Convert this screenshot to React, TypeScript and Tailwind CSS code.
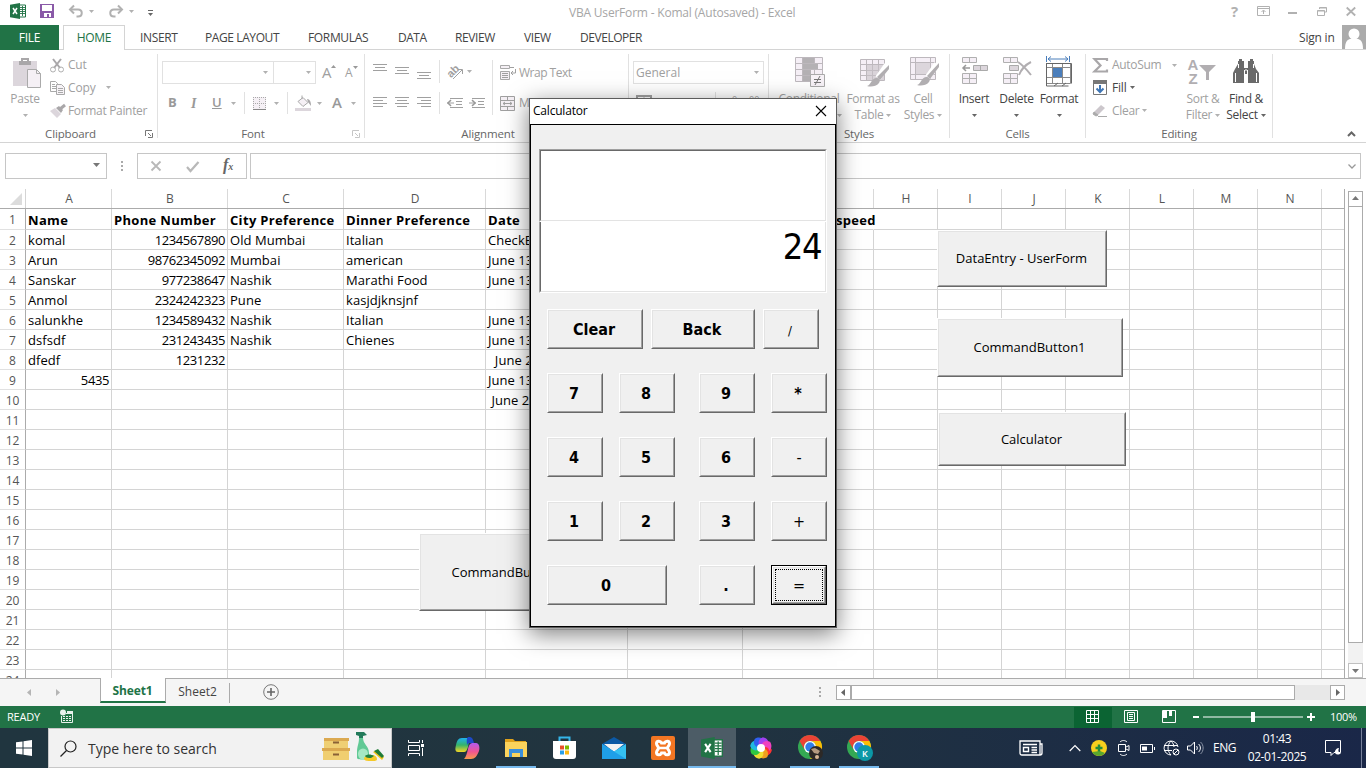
import React from "react";

type Kids = { children?: React.ReactNode; className?: string };

/* ---------- small shared pieces ---------- */

function Svg({ w, h, className = "", children }: { w: number; h: number; className?: string; children: React.ReactNode }) {
  return (
    <svg width={w} height={h} viewBox={`0 0 ${w} ${h}`} className={"block shrink-0 overflow-visible " + className} fill="none">
      {children}
    </svg>
  );
}

function Caret({ className = "text-[#b1b1b1]" }: { className?: string }) {
  return (
    <Svg w={5} h={3} className={className}>
      <path d="M0 0h5L2.500 3z" fill="currentColor" />
    </Svg>
  );
}

function Slot({ className = "", children }: Kids) {
  return <div className={"flex shrink-0 items-center whitespace-nowrap " + className}>{children}</div>;
}

function Launcher({ className = "" }: { className?: string }) {
  return (
    <Svg w={8} h={8} className={className}>
      <path d="M.5 6V.5H7M3 3l3 3M7.500 3v4.500H3" stroke="currentColor" />
    </Svg>
  );
}

function ExcelLogo({ s = 16 }: { s?: number }) {
  return (
    <svg width={s} height={s} viewBox="0 0 16 16" className="block shrink-0">
      <path d="M9 2h6.500v12H9z" fill="#fff" stroke="#217346" />
      <path d="M10 4.500h5M10 6.500h5M10 8.500h5M10 10.500h5M12.500 3v10" stroke="#217346" strokeWidth=".9" />
      <path d="M0 1.800 10 0v16L0 14.200z" fill="#217346" />
      <path d="M3 5l4 6M7 5l-4 6" stroke="#fff" strokeWidth="1.500" />
    </svg>
  );
}

/* ---------- title bar and tabs ---------- */

function TitleBar() {
  return (
    <div className="flex h-[25px] w-full text-[#b1b1b1]">
      <Slot className="w-[40px] pb-[3px] pl-[10px]"><ExcelLogo /></Slot>
      <Slot className="w-[29px] pb-[3px]">
        <Svg w={14} h={14}>
          <path d="M0 0h14v14H0z" fill="#8a5aa8" />
          <path d="M2 1h10v6H2zM4 9h7v4H4z" fill="#fff" />
          <path d="M7 10h2v3H7z" fill="#8a5aa8" />
        </Svg>
      </Slot>
      <Slot className="w-[40px] pb-[3px]">
        <Svg w={14} h={13}>
          <path d="M2 4.500h7c5 0 5 7 0 7H7.500" stroke="#b1b1b1" strokeWidth="2" />
          <path d="M5 .5 1 4.500l4 4" stroke="#b1b1b1" strokeWidth="2" />
        </Svg>
        <Caret className="ml-[6px] text-[#b1b1b1]" />
      </Slot>
      <Slot className="w-[39px] pb-[3px]">
        <Svg w={14} h={13}>
          <path d="M12 4.500H5c-5 0-5 7 0 7h1.500" stroke="#b1b1b1" strokeWidth="2" />
          <path d="M9 .5l4 4-4 4" stroke="#b1b1b1" strokeWidth="2" />
        </Svg>
        <Caret className="ml-[6px] text-[#b1b1b1]" />
      </Slot>
      <Slot className="w-[421px]">
        <Svg w={5} h={6}>
          <path d="M0 .5h5" stroke="#666" />
          <path d="M0 3h5L2.500 6z" fill="#666" />
        </Svg>
      </Slot>
      <Slot className="w-[662px] text-[12px] tracking-[-0.2px] text-[#a6a6a6]">VBA UserForm - Komal (Autosaved) - Excel</Slot>
      <Slot className="w-[26px] pb-[3px] text-[15px] font-bold">?</Slot>
      <Slot className="w-[31px] pb-[3px]">
        <Svg w={13} h={10}>
          <path d="M.5.5h12v9H.5zM.5 2.500h12M6.500 8V4.500M4.500 6l2-2 2 2" stroke="#b1b1b1" />
        </Svg>
      </Slot>
      <Slot className="w-[29px]">
        <Svg w={9} h={2}><path d="M0 0h9v2H0z" fill="#b1b1b1" /></Svg>
      </Slot>
      <Slot className="w-[29px] pb-[3px]">
        <Svg w={10} h={9}>
          <path d="M2.500 2V.5h7V5H8M.5 3.500h7v5h-7zM.5 4h7M2.500 1h7" stroke="#b1b1b1" />
        </Svg>
      </Slot>
      <Slot className="pb-[3px]">
        <Svg w={10} h={9}><path d="M.7.5l8.500 8M9.200.5l-8.500 8" stroke="#b1b1b1" strokeWidth="1.800" /></Svg>
      </Slot>
    </div>
  );
}

function Tabs() {
  return (
    <div className="flex h-[25px] w-full text-[12px] text-[#444]">
      <div className="flex h-[25px] w-[59px] items-center justify-center bg-[#217346] tracking-[-0.3px] text-white">FILE</div>
      <div className="w-[4px] border-b border-[#d4d4d4]" />
      <div className="flex w-[62px] items-center justify-center border-x border-t border-[#d4d4d4] tracking-[-0.3px] text-[#217346]">HOME</div>
      <div className="flex flex-1 border-b border-[#d4d4d4] pt-px">
        <Slot className="w-[80px] pl-[15px] tracking-[-0.35px]">INSERT</Slot>
        <Slot className="w-[103px] tracking-[-0.4px]">PAGE LAYOUT</Slot>
        <Slot className="w-[90px] tracking-[-0.35px]">FORMULAS</Slot>
        <Slot className="w-[57px] tracking-[-0.5px]">DATA</Slot>
        <Slot className="w-[69px] tracking-[-0.4px]">REVIEW</Slot>
        <Slot className="w-[56px] tracking-[-0.4px]">VIEW</Slot>
        <Slot className="w-[719px] tracking-[-0.45px]">DEVELOPER</Slot>
        <Slot className="w-[43px] tracking-[-0.2px]">Sign in</Slot>
        <Svg w={24} h={24} className="-mt-px">
          <path d="M0 0h24v24H0z" fill="#ababab" />
          <circle cx="12" cy="9" r="5.500" fill="#fff" />
          <path d="M3 24c0-8 3-10 6-10h6c3 0 6 2 6 10z" fill="#fff" />
        </Svg>
      </div>
    </div>
  );
}

/* ---------- ribbon ---------- */

function Group({ label, className, labelClass = "", launcher, children }: { label: string; className: string; labelClass?: string; launcher?: string; children: React.ReactNode }) {
  return (
    <div className={"flex h-[84px] shrink-0 flex-col border-r border-[#e1e1e1] " + className}>
      <div className="flex h-[72px] shrink-0">{children}</div>
      <div className="flex h-[16px] items-center text-[11.500px] tracking-[-0.15px] text-[#666]">
        <div className={"flex-1 text-center " + labelClass}>{label}</div>
        {launcher ? <Launcher className={"-ml-[8px] mr-[4px] " + launcher} /> : null}
      </div>
    </div>
  );
}

function Big({ className, icon, a, b, caretOnly, dark }: { className: string; icon: React.ReactNode; a: string; b?: string; caretOnly?: boolean; dark?: boolean }) {
  const tone = dark ? "text-[#444]" : "text-[#a0a0a0]";
  return (
    <div className={"flex shrink-0 flex-col items-center whitespace-nowrap text-[12px] tracking-[-0.3px] " + tone + " " + className}>
      <div className="flex h-[40px] items-start pt-[3px]">{icon}</div>
      <div className="flex h-[10px] items-center">{a}</div>
      <div className="flex h-[22px] items-center gap-[3px]">
        {b ? <span>{b}</span> : null}
        {b || caretOnly ? <Caret className={dark ? "text-[#666]" : "text-[#b1b1b1]"} /> : null}
      </div>
    </div>
  );
}

function Lines({ rows }: { rows: [number, number][] }) {
  return (
    <Svg w={14} h={rows.length * 3}>
      {rows.map(([x, w], i) => (
        <path key={i} d={`M${x} ${i * 3 + 0.5}h${w}`} stroke="#a0a0a0" />
      ))}
    </Svg>
  );
}

const wide: [number, number] = [0, 14];
const mid: [number, number] = [2, 10];

function Ribbon() {
  return (
    <div className="flex h-[93px] w-full border-b border-[#d4d4d4] pt-[4px] text-[12px] text-[#a0a0a0]">
      <Group label="Clipboard" className="w-[158px]" labelClass="pr-[12px]" launcher="text-[#777]">
        <div className="flex w-[51px] flex-col items-center pr-px">
          <div className="flex h-[40px] items-start pl-[4px] pt-[4px]">
            <Svg w={29} h={30}>
              <path d="M0 3h24v25H0z" fill="#dcd6dc" />
              <path d="M6 3h12v4H6z" fill="#a9a7a9" />
              <path d="M9 3V1h6v2" stroke="#a9a7a9" strokeWidth="2" />
              <path d="M14.500 11.500h9l4 4v14h-13z" fill="#f5f0f5" stroke="#aaa" />
              <path d="M23.500 11.500v4h4" stroke="#aaa" />
            </Svg>
          </div>
          <div className="flex h-[10px] items-center tracking-[-0.2px]">Paste</div>
          <div className="flex h-[22px] items-center"><Caret /></div>
        </div>
        <div className="-ml-px flex flex-col">
          <Slot className="h-[22px] tracking-[-0.2px]">
            <Svg w={14} h={15} className="mr-[4px]">
              <path d="M3 1l7 9M11 1L4 10" stroke="#a9a7a9" strokeWidth="2" />
              <circle cx="3" cy="11.500" r="2.500" stroke="#b0b0b0" />
              <circle cx="11" cy="11.500" r="2.500" stroke="#b0b0b0" />
            </Svg>
            Cut
          </Slot>
          <Slot className="h-[23px] tracking-[-0.1px]">
            <Svg w={15} h={14} className="mr-[3px]">
              <path d="M.5.5h5l2 2v8h-7z" fill="#fff" stroke="#a9a9a9" />
              <path d="M2 3.500h3M2 5.500h4M2 7.500h4" stroke="#a9a9a9" />
              <path d="M6.500 3.500h5l3 3v7h-8z" fill="#f7f3f7" stroke="#a9a9a9" />
              <path d="M8 7.500h5M8 9.500h5M8 11.500h5" stroke="#a9a9a9" />
            </Svg>
            <span className="w-[38px]">Copy</span><Caret />
          </Slot>
          <Slot className="h-[23px] tracking-[-0.33px]">
            <Svg w={16} h={14} className="mr-[2px]">
              <path d="M0 7l5-3 6 6-4 4z" fill="#dcd6dc" />
              <path d="M6 4l3-2 4 4-2 3z" fill="#a9a7a9" />
              <path d="M10 5l5-4" stroke="#a9a7a9" strokeWidth="3" />
            </Svg>
            Format Painter
          </Slot>
        </div>
      </Group>

      <Group label="Font" className="w-[207px]" labelClass="pr-[12px]" launcher="text-[#c6c6c6]">
        <div className="flex flex-col pl-[4px] pt-[7px]">
          <div className="flex h-[23px]">
            <div className="flex w-[112px] items-center justify-end border border-[#e1e1e1] pr-[5px]"><Caret /></div>
            <div className="flex w-[42px] items-center justify-end border border-l-0 border-[#e1e1e1] pr-[4px]"><Caret /></div>
            <Slot className="ml-[6px] w-[23px] text-[15px]">
              <span className="w-[9px]">A</span>
              <Svg w={5} h={3} className="mb-[12px]"><path d="M0 3h5L2.500 0z" fill="#999" /></Svg>
            </Slot>
            <Slot className="w-[16px] pt-[1px] text-[12px]">
              <span>A</span>
              <Caret className="mb-[12px] text-[#999]" />
            </Slot>
          </div>
          <div className="mt-[8px] flex h-[22px] items-center text-[13px] text-[#999]">
            <Slot className="w-[22px] pl-[6px] font-bold">B</Slot>
            <Slot className="w-[22px] pl-[7px] font-['Liberation_Serif',serif] text-[14px] font-bold italic">I</Slot>
            <Slot className="w-[24px] pl-[6px] font-semibold underline">U</Slot>
            <Slot className="h-[22px] w-[15px] border-r border-[#e1e1e1] pl-px"><Caret /></Slot>
            <Slot className="ml-[8px] w-[20px]">
              <Svg w={13} h={13}>
                <path d="M0 0h13v13H0z" fill="#f5f0f5" />
                <path d="M0 .5h13M.5 0v13M12.500 0v13M6.500 0v12M0 6.500h12" stroke="#a9a9a9" strokeDasharray="1 1" />
                <path d="M0 12.500h13" stroke="#888" />
              </Svg>
            </Slot>
            <Slot className="h-[22px] w-[15px] border-r border-[#e1e1e1] pl-[1px]"><Caret /></Slot>
            <Slot className="ml-[7px] w-[22px]">
              <Svg w={17} h={16}>
                <path d="M3 6.500l5-4 5 5-5 4z" fill="#f5f0f5" stroke="#a9a9a9" />
                <path d="M7 4V.5" stroke="#a9a9a9" />
                <path d="M12 4c3 0 4 3 4 7l-3-4z" fill="#a9a7a9" />
                <path d="M0 13h16v3H0z" fill="#dcd6dc" />
              </Svg>
            </Slot>
            <Slot className="w-[15px]"><Caret /></Slot>
            <Slot className="w-[19px] pb-[2px] text-[15px] font-semibold">A</Slot>
            <Caret />
          </div>
        </div>
      </Group>

      <Group label="Alignment" className="w-[264px]" labelClass="pr-[17px]">
        <div className="flex flex-col pl-[8px] pt-[6px]">
          <div className="flex h-[23px]">
            <Slot className="mb-[6px] w-[22px]"><Lines rows={[wide, mid, wide]} /></Slot>
            <Slot className="w-[22px]"><Lines rows={[wide, mid, wide]} /></Slot>
            <Slot className="mt-[9px] w-[22px]"><Lines rows={[wide, mid, wide]} /></Slot>
            <Slot className="w-[8px] border-l border-[#e1e1e1]" />
            <Slot className="w-[20px]">
              <Svg w={16} h={16}>
                <text x="0" y="11" fontSize="11" fontFamily="Liberation Sans" fontWeight="bold" fill="#a0a0a0" transform="rotate(-45 6 8)">ab</text>
                <path d="M6 15l9-9M11 5.500h4.500V10" stroke="#a0a0a0" />
              </Svg>
            </Slot>
            <Slot className="w-[25px]"><Caret /></Slot>
          </div>
          <div className="mt-[9px] flex h-[22px]">
            <Slot className="w-[22px]"><Lines rows={[wide, [0, 10], wide, [0, 10]]} /></Slot>
            <Slot className="w-[22px]"><Lines rows={[wide, mid, wide, mid]} /></Slot>
            <Slot className="w-[22px]"><Lines rows={[wide, [4, 10], wide, [4, 10]]} /></Slot>
            <Slot className="w-[8px] border-l border-[#e1e1e1]" />
            <Slot className="w-[22px]">
              <Svg w={16} h={11}>
                <path d="M3 .5h13M9 3.500h6M9 6.500h6M3 9.500h13M0 5h7" stroke="#a0a0a0" />
                <path d="M4 2L1 5l3 3" stroke="#999" strokeWidth="1.500" />
              </Svg>
            </Slot>
            <Slot className="w-[22px]">
              <Svg w={16} h={11}>
                <path d="M3 .5h13M9 3.500h6M9 6.500h6M3 9.500h13M0 5h7" stroke="#a0a0a0" />
                <path d="M3 2l3 3-3 3" stroke="#999" strokeWidth="1.500" />
              </Svg>
            </Slot>
          </div>
        </div>
        <div className="mt-[6px] flex h-[55px] flex-col justify-between border-l border-[#e1e1e1] pl-[7px]">
          <Slot className="h-[24px] pt-px tracking-[-0.5px]">
            <Svg w={16} h={15} className="mr-[3px]">
              <path d="M.5.5h9v3h-9zM.5 6.500h9v8h-9z" fill="#f5f0f5" stroke="#a9a9a9" />
              <path d="M2 8.500h6M2 10.500h6M2 12.500h6M10 2.500h4M15.500 4v4H11M13 6l-2 2 2 2" stroke="#a0a0a0" />
            </Svg>
            Wrap Text
          </Slot>
          <Slot className="h-[24px] tracking-[-0.2px]">
            <Svg w={16} h={15} className="mr-[3px]">
              <path d="M.5.5h14v14H.5zM.5 4.500h14M.5 10.500h14M7.500 0v4M7.500 11v4M3 7.500h9M5 6L3 7.500 5 9M10 6l2 1.500L10 9" fill="#f5f0f5" stroke="#a0a0a0" />
            </Svg>
            Merge &amp; Center
          </Slot>
        </div>
      </Group>

      <Group label="Number" className="w-[140px]">
        <div className="flex flex-col pl-[4px] pt-[7px]">
          <div className="flex h-[23px] w-[131px] items-center justify-between border border-[#e1e1e1] pl-[2px] pr-[4px]">General<Caret /></div>
          <div className="mt-[8px] flex h-[22px] items-start pl-[3px]">
            <Svg w={16} h={10} className="mt-[3px]"><path d="M1 1h14v8H1z" stroke="#a0a0a0" strokeWidth="2" /><circle cx="8" cy="5" r="2" stroke="#a0a0a0" /></Svg>
            <span className="ml-[21px] w-[42px] pt-[5px] text-[13px] leading-[14px]">%</span>
            <div className="h-[22px] w-[8px] border-l border-[#e1e1e1]" />
            <span className="w-[26px] text-[9px] leading-[15px]">←0</span>
            <span className="text-[9px] leading-[15px]">00</span>
          </div>
        </div>
      </Group>

      <Group label="Styles" className="w-[181px]">
        <Big className="w-[80px]" a="Conditional" b="Formatting" icon={
          <Svg w={31} h={31} className="ml-[3px]">
            <path d="M.5.5h27v24H.5zM0 6.500h28M0 12.500h28M0 18.500h28M7.500 0v24M19.500 0v24" fill="#f5eff6" stroke="#bdb8bd" />
            <path d="M8 1h11v5H8zM8 7h15v5H8zM8 13h8v5H8zM8 19h10v5H8z" fill="#b4b1b4" />
            <path d="M15.500 17.500h14v12h-14z" fill="#f7f2f7" stroke="#aaa" />
            <path d="M19 22.500h7M19 25.500h7M25 19l-5 9" stroke="#777" />
          </Svg>} />
        <Big className="w-[48px]" a="Format as" b="Table" icon={
          <Svg w={30} h={31} className="ml-[3px]">
            <path d="M.5 2.500h24v21H.5zM0 7.500h24M0 13.500h24M0 18.500h24M6.500 2v21M12.500 2v21M18.500 2v21" fill="#f5eff6" stroke="#bdb8bd" />
            <path d="M7 8h17v15H7z" fill="#c6c0c6" opacity=".6" />
            <path d="M27 8l-9 13" stroke="#fff" strokeWidth="6" />
            <path d="M29 8v4l-9 11-3-3z" fill="#b1aeb1" />
            <path d="M16 21c3 0 5 2 3 5-3 4-9 4-12 3 4-1 4-7 9-8z" fill="#b1aeb1" />
          </Svg>} />
        <Big className="w-[52px]" a="Cell" b="Styles" icon={
          <Svg w={30} h={31} className="ml-[3px]">
            <path d="M.5.5h25v22H.5zM0 5.500h25M0 17.500h25M5.500 0v22M20.500 0v22" fill="#f5eff6" stroke="#bdb8bd" />
            <path d="M6 6h14v11H6z" fill="#dcd6dc" />
            <path d="M27 7l-9 13" stroke="#fff" strokeWidth="6" />
            <path d="M29 6v4l-9 12-3-3z" fill="#b1aeb1" />
            <path d="M16 20c3 0 5 2 3 5-3 4-9 4-12 3 4-1 4-7 9-8z" fill="#b1aeb1" />
          </Svg>} />
      </Group>

      <Group label="Cells" className="w-[136px]">
        <Big dark caretOnly className="w-[48px]" a="Insert" icon={
          <Svg w={27} h={28} className="ml-[2px]">
            <path d="M.5.5h14v5H.5zM7.500 0v5M.5 16.500h14v10H.5zM.5 21.500h14M7.500 17v9" fill="#f5eff6" stroke="#b0b0b0" />
            <path d="M11.500 8.500h14v5h-14zM18.500 8v5" fill="#dcd6dc" stroke="#aaa" />
            <path d="M1 11h7M4 8l-3 3 3 3" stroke="#999" strokeWidth="1.500" />
          </Svg>} />
        <Big dark caretOnly className="w-[37px]" a="Delete" icon={
          <Svg w={30} h={28} className="ml-[3px]">
            <path d="M.5.5h14v5H.5zM7.500 0v5M.5 16.500h14v10H.5zM.5 21.500h14M7.500 17v9" fill="#f5eff6" stroke="#b0b0b0" />
            <path d="M6.500 8.500h9v5h-9z" fill="#dcd6dc" stroke="#aaa" />
            <path d="M15 5c5 3 9 8 13 13M28 5c-6 3-10 8-12 13" stroke="#b1aeb1" strokeWidth="2" />
          </Svg>} />
        <Big dark caretOnly className="ml-px w-[46px]" a="Format" icon={
          <Svg w={29} h={32} className="-ml-[2px] -mt-[2px]">
            <path d="M2.500 1v6M25.500 1v6M4 4h20M7 1.500L4 4l3 2.500M21 1.500L24 4l-3 2.500" stroke="#4a7ebb" />
            <path d="M2.500 8.500h24v20h-24zM2 12.500h24M2 22.500h24M8.500 8v20M18.500 8v20" fill="#fff" stroke="#8a8a8a" />
            <path d="M2.500 8v23h22M2.500 8.500h25v20M10 31l4-3M18 31l4-3" stroke="#666" />
            <path d="M9 13h9v9H9z" fill="#4a7ebb" />
          </Svg>} />
      </Group>

      <Group label="Editing" className="w-[187px]">
        <div className="flex w-[98px] flex-col pl-[7px]">
          <Slot className="h-[22px] tracking-[-0.3px]">
            <Svg w={15} h={15} className="mr-[4px]"><path d="M14 3V1H1.500l6 6.500-6 6H14v-2" stroke="#a9a7a9" strokeWidth="2.200" /></Svg>
            <span className="w-[60px]">AutoSum</span><Caret />
          </Slot>
          <Slot className="h-[23px] gap-[3px] tracking-[-0.2px] text-[#444]">
            <Svg w={15} h={16} className="mr-[1px]">
              <path d="M.5.5h13v14H.5z" fill="#fff" stroke="#777" />
              <path d="M0 0h14v4H0z" fill="#777" />
              <path d="M7 5v7M3.500 8.500L7 12l3.500-3.500" stroke="#3f76b5" strokeWidth="2" />
            </Svg>
            <span className="w-[15px]">Fill</span><Caret className="text-[#666]" />
          </Slot>
          <Slot className="h-[23px] gap-[3px] tracking-[-0.3px]">
            <Svg w={15} h={12} className="mr-[1px]">
              <path d="M1 7l7-7 4 3-7 7z" fill="#ccc7cc" />
              <path d="M1 7l4 3-2 1-3-2zM5 11.500h9" fill="#aaa" stroke="#aaa" />
            </Svg>
            Clear<Caret />
          </Slot>
        </div>
        <Big className="w-[38px]" a="Sort &amp;" b="Filter" icon={
          <div className="-ml-[3px] mt-px flex text-[#b1aeb1]">
            <div className="flex w-[12px] flex-col items-center font-['Liberation_Sans',sans-serif] text-[15px] leading-[14px] font-bold tracking-normal">
              <span>A</span><span>Z</span>
            </div>
            <Svg w={17} h={29}><path d="M0 7h17l-7 7v8H7v-8z" fill="#b1aeb1" /></Svg>
          </div>} />
        <Big dark className="w-[48px]" a="Find &amp;" b="Select" icon={
          <Svg w={26} h={25} className="mt-[2px]">
            <path d="M5 2h1V0h3v2h2v7h4V2h2V0h3v2h1v3l2 5 3 4v10H15v-9h-4v9H0V14l2-4 3-5z" fill="#6a6a6a" />
            <path d="M2.500 14v9M23.500 14v9M12 11h2M11.500 11v4M14.500 11v4M5.500 5v4M20.500 5v4" stroke="#fff" />
          </Svg>} />
      </Group>
      <div className="flex flex-1 items-end justify-end pb-[5px] pr-[10px]">
        <Svg w={9} h={6}><path d="M1 5l3.500-3.500L8 5" stroke="#666" strokeWidth="2" /></Svg>
      </div>
    </div>
  );
}

function FormulaBar() {
  return (
    <div className="flex h-[46px] w-full pl-[5px] pr-[5px] pt-[10px]">
      <div className="flex h-[26px] w-[102px] items-center justify-end border border-[#c6c6c6] pb-[2px] pr-[6px]">
        <Svg w={7} h={4}><path d="M0 0h7L3.500 4z" fill="#777" /></Svg>
      </div>
      <div className="flex h-[26px] w-[30px] items-center justify-center">
        <Svg w={2} h={10}><path d="M0 0h2v2H0zM0 4h2v2H0zM0 8h2v2H0z" fill="#aaa" /></Svg>
      </div>
      <div className="flex h-[26px] w-[110px] items-center border border-[#c6c6c6] pl-[13px]">
        <Svg w={10} h={10}><path d="M.5.5l9 9M9.500.5l-9 9" stroke="#b8b8b8" strokeWidth="1.800" /></Svg>
        <Svg w={13} h={11} className="ml-[25px]"><path d="M1 6l3.500 4 8-9" stroke="#b8b8b8" strokeWidth="2.200" /></Svg>
        <span className="ml-[24px] pb-[2px] font-['Liberation_Serif',serif] text-[16px] leading-none font-bold italic text-[#666]">f<span className="text-[10px]">x</span></span>
      </div>
      <div className="ml-[3px] flex h-[26px] flex-1 items-center justify-end border border-[#c6c6c6] pr-[4px]">
        <Svg w={8} h={5}><path d="M.5.5L4 4 7.500.5" stroke="#999" strokeWidth="1.300" /></Svg>
      </div>
    </div>
  );
}

/* ---------- sheet ---------- */

const columns: { name: string; w: string }[] = [
  { name: "A", w: "w-[86px]" },
  { name: "B", w: "w-[116px]" },
  { name: "C", w: "w-[116px]" },
  { name: "D", w: "w-[142px]" },
  { name: "E", w: "w-[142px]" },
  { name: "F", w: "w-[115px]" },
  { name: "G", w: "w-[131px]" },
  { name: "H", w: "w-[64px]" },
  { name: "I", w: "w-[64px]" },
  { name: "J", w: "w-[64px]" },
  { name: "K", w: "w-[64px]" },
  { name: "L", w: "w-[64px]" },
  { name: "M", w: "w-[64px]" },
  { name: "N", w: "w-[64px]" },
  { name: "", w: "w-[22px] border-r-0" },
];

const data: string[][] = [
  ["Name", "Phone Number", "City Preference", "Dinner Preference", "Date", "", "speed"],
  ["komal", "1234567890", "Old Mumbai", "Italian", "CheckBox"],
  ["Arun", "98762345092", "Mumbai", "american", "June 13"],
  ["Sanskar", "977238647", "Nashik", "Marathi Food", "June 13"],
  ["Anmol", "2324242323", "Pune", "kasjdjknsjnf", ""],
  ["salunkhe", "1234589432", "Nashik", "Italian", "June 13"],
  ["dsfsdf", "231243435", "Nashik", "Chienes", "June 13"],
  ["dfedf", "1231232", "", "", "\u00a0\u00a0June 2"],
  ["5435", "", "", "", "June 13"],
  ["", "", "", "", "\u00a0June 2"],
];

function Cell({ r, c, w }: { r: number; c: number; w: string }) {
  const text = (data[r] && data[r][c]) || "";
  const numeric = /^\d+$/.test(text);
  return (
    <div
      className={
        "flex shrink-0 items-center border-b border-r border-[#d4d4d4] whitespace-nowrap px-[2px] leading-[16px] " +
        w +
        (numeric ? " justify-end tracking-[-0.4px]" : r === 0 ? " tracking-[0.33px]" : " tracking-[0.05px]") +
        (r === 0 ? " h-[21px] pt-px font-bold" : " h-[20px]") +
        (r === 0 && c === 6 ? " border-r-transparent pl-[93px]" : "")
      }
    >
      {text}
    </div>
  );
}

function SheetButton({ className, children }: Kids) {
  return (
    <div className={"absolute flex border border-b-[#696969] border-l-white border-r-[#696969] border-t-white " + className}>
      <div className="flex flex-1 items-center justify-center border border-b-[#a0a0a0] border-l-[#e3e3e3] border-r-[#a0a0a0] border-t-[#e3e3e3] bg-[#f0f0f0] pr-px pt-px text-[13px] text-black">
        {children}
      </div>
    </div>
  );
}

function Sheet() {
  return (
    <div className="relative flex h-[489px] w-full overflow-hidden">
      <div className="flex w-[1345px] flex-col overflow-hidden border-r border-[#ababab]">
        <div className="flex h-[20px] shrink-0 border-b border-[#ababab] text-[12px] text-[#555]">
          <div className="flex w-[26px] shrink-0 items-end justify-end border-r border-[#d4d4d4] pb-[3px] pr-[3px]">
            <Svg w={12} h={12}><path d="M12 0v12H0z" fill="#dcdcdc" /></Svg>
          </div>
          {columns.map((c) => (
            <div key={c.name} className={"flex shrink-0 items-center justify-center border-r border-[#d9d9d9] pl-px " + c.w}>{c.name}</div>
          ))}
        </div>
        {Array.from({ length: 24 }, (_, r) => (
          <div key={r} className={"flex shrink-0 text-[13px] text-black " + (r === 0 ? "h-[21px]" : "h-[20px]")}>
            <div className="flex w-[26px] shrink-0 items-center justify-center border-b border-r border-b-[#e1e1e1] border-r-[#ababab] pt-[2px] text-[12px] leading-[16px] text-[#555]">{r + 1}</div>
            {columns.map((c, i) => (
              <Cell key={i} r={r} c={i} w={c.w} />
            ))}
          </div>
        ))}
      </div>
      <div className="flex flex-1 flex-col pl-[3px] pt-[2px]">
        <div className="flex h-[16px] w-[15px] items-center justify-center border border-[#ababab] pb-px">
          <Svg w={7} h={4}><path d="M0 4h7L3.500 0z" fill="#777" /></Svg>
        </div>
        <div className="-mt-px h-[438px] w-[15px] border border-[#ababab] bg-white" />
        <div className="h-[20px] w-[15px] bg-[#f2f2f2]" />
        <div className="flex h-[15px] w-[15px] items-center justify-center border border-[#c0c0c0]">
          <Svg w={7} h={4}><path d="M0 0h7L3.500 4z" fill="#777" /></Svg>
        </div>
      </div>
      <SheetButton className="left-[937px] top-[41px] h-[57px] w-[170px]">DataEntry - UserForm</SheetButton>
      <SheetButton className="left-[937px] top-[129px] h-[59px] w-[186px]">CommandButton1</SheetButton>
      <SheetButton className="left-[938px] top-[223px] h-[54px] w-[188px]">Calculator</SheetButton>
      <SheetButton className="left-[419px] top-[344px] h-[78px] w-[178px]">CommandButton2</SheetButton>
    </div>
  );
}

function SheetTabs() {
  return (
    <div className="flex h-[28px] w-full border-t border-[#ababab] bg-[#f5f5f5] text-[12px] text-[#444]">
      <Slot className="w-[100px] pb-px pl-[27px]">
        <Svg w={4} h={7}><path d="M4 0v7L0 3.500z" fill="#b5b5b5" /></Svg>
        <Svg w={4} h={7} className="ml-[25px]"><path d="M0 0v7l4-3.500z" fill="#b5b5b5" /></Svg>
      </Slot>
      <div className="-mt-px flex h-[25px] w-[66px] items-center justify-center border-x border-b-2 border-x-[#ababab] border-b-[#217346] bg-white pr-px pt-[3px] font-bold tracking-[-0.15px] text-[#217346]">Sheet1</div>
      <Slot className="mt-[4px] h-[20px] w-[64px] justify-center border-r border-[#ababab] pb-[2px]">Sheet2</Slot>
      <Slot className="w-[588px] pb-px pl-[33px]">
        <Svg w={16} h={16}>
          <circle cx="8" cy="8" r="7.300" stroke="#777" />
          <path d="M8 4v8M4 8h8" stroke="#666" strokeWidth="1.600" />
        </Svg>
      </Slot>
      <Slot className="w-[18px] pb-px">
        <Svg w={2} h={10} className="ml-px"><path d="M0 0h2v2H0zM0 4h2v2H0zM0 8h2v2H0z" fill="#aaa" /></Svg>
      </Slot>
      <div className="mt-[6px] flex h-[15px]">
        <div className="flex w-[15px] items-center justify-center border border-[#ababab] bg-white pr-px">
          <Svg w={4} h={7}><path d="M4 0v7L0 3.500z" fill="#666" /></Svg>
        </div>
        <div className="w-[444px] border border-[#ababab] bg-white" />
        <div className="w-[35px] bg-[#e8e8e8]" />
        <div className="flex w-[15px] items-center justify-center border border-[#ababab] bg-white">
          <Svg w={4} h={7}><path d="M0 0v7l4-3.500z" fill="#666" /></Svg>
        </div>
      </div>
    </div>
  );
}

function StatusBar() {
  return (
    <div className="flex h-[22px] w-full bg-[#217346] text-[11px] text-white">
      <Slot className="w-[60px] pl-[7px] tracking-[-0.2px]">READY</Slot>
      <Slot className="w-[1014px] pb-px">
        <Svg w={13} h={13}>
          <path d="M1.500 6v6.500h11V3M7 1.500h6M6 3.500h7" stroke="#e8f1ec" />
          <path d="M7 1h6v2H7z" fill="#e8f1ec" />
          <circle cx="3" cy="2.500" r="3" fill="#e8f1ec" />
          <path d="M3 6.500h9M3 8.500h9M3 10.500h9" stroke="#e8f1ec" strokeDasharray="2 1" />
        </Svg>
      </Slot>
      <div className="mt-px flex w-[38px] items-center justify-center bg-[#0b6433] pb-[2px] pr-px">
        <Svg w={13} h={13}><path d="M.5.5h12v12H.5zM.5 4.500h12M.5 8.500h12M4.500 0v13M8.500 0v13" stroke="#fff" /></Svg>
      </div>
      <Slot className="w-[50px] pb-px pl-[12px]">
        <Svg w={14} h={13}><path d="M.5.5h13v12H.5zM3.500 2.500h7v8h-7zM5 4.500h4M5 6.500h4M5 8.500h4" stroke="#fff" /></Svg>
      </Slot>
      <Slot className="w-[31px] pb-px">
        <Svg w={14} h={13}><path d="M.5.5h13v12H.5z" stroke="#fff" /><path d="M1 1h4v7H1zM7 1h3v5H7z" fill="#fff" /></Svg>
      </Slot>
      <Slot className="w-[137px]">
        <Svg w={122} h={12}>
          <path d="M0 5h6v2H0zM10 5.500h100v1H10zM58 1h4v10h-4zM114 5h8v2h-8zM117 2h2v8h-2z" fill="#fff" />
        </Svg>
      </Slot>
      <Slot className="tracking-[-0.3px]">100%</Slot>
    </div>
  );
}

/* ---------- taskbar ---------- */

function Task({ open, active, children }: { open?: boolean; active?: boolean; children: React.ReactNode }) {
  return (
    <div className={"flex h-[40px] shrink-0 flex-col items-center " + (active ? "mr-px w-[48px] bg-[#4c5c66]" : "w-[49px] pr-px")}>
      <div className="flex h-[38px] items-center pr-px pt-[2px]">{children}</div>
      {open || active ? <div className={"h-[2px] bg-[#76b9ed] " + (active ? "w-[48px]" : "w-[40px]")} /> : null}
    </div>
  );
}

function Chrome({ children }: Kids) {
  return (
    <Svg w={28} h={28} className="ml-[2px]">
      <circle cx="13" cy="13" r="12" fill="#34a853" />
      <path d="M2.600 7A12 12 0 0 1 23.400 7H13a6 6 0 0 0-5.200 9z" fill="#ea4335" />
      <path d="M23.400 7A12 12 0 0 1 13 25l5.200-9A6 6 0 0 0 13 7z" fill="#fbbc05" />
      <circle cx="13" cy="13" r="6" fill="#fff" />
      <circle cx="13" cy="13" r="4.700" fill="#2f7de9" />
      {children}
    </Svg>
  );
}

function Taskbar() {
  return (
    <div className="flex h-[40px] w-full bg-linear-to-r from-[#20353f] via-[#21343f] to-[#1a2748] text-white">
      <div className="flex w-[48px] items-center justify-center">
        <Svg w={16} h={16}><path d="M0 2.300L6.500 1.400v6.100H0zM7.500 1.200L16 0v7.500H7.500zM0 8.500h6.500v6.100L0 13.700zM7.500 8.500H16V16l-8.500-1.200z" fill="#fff" /></Svg>
      </div>
      <div className="flex w-[344px] items-center border border-[#c8c8c8] bg-[#f2f2f2] pl-[11px] text-[14px] text-[#333]">
        <Svg w={17} h={17}><circle cx="10.500" cy="6.500" r="5.500" stroke="#222" strokeWidth="1.200" /><path d="M6.500 10.500L.5 16.500" stroke="#222" strokeWidth="1.300" /></Svg>
        <span className="ml-[11px] w-[234px] whitespace-nowrap">Type here to search</span>
        <Svg w={63} h={32}>
          <path d="M2 7h24v10H2z" fill="#efcf73" /><path d="M2 6h25v3H2z" fill="#dba950" />
          <path d="M0 16h28v3H0z" fill="#dba950" /><path d="M1 19h26v9H1z" fill="#f0ce70" />
          <path d="M11 10.500h6M11 22.500h6" stroke="#8a6136" strokeWidth="2" />
          <path d="M34 0h8l3 3-4 1v3h-4V4l-3-1z" fill="#237a5a" />
          <path d="M37 6h4c0 6 6 8 6 15v5c0 2-12 2-12 0v-6c0-6 2-8 2-14z" fill="#61c995" />
          <ellipse cx="41" cy="22" rx="5" ry="5.500" fill="#a5e8c4" />
          <path d="M42 26c2-3 5-3 8-3s5 2 5 4-2 2-6 2-7 0-7-3z" fill="#f5c928" />
          <path d="M43 24c2-2 6-2 9 0l-3 2c-2 0-5 0-6-2z" fill="#23823e" />
          <path d="M51 20l4-2 7 7-2 3z" fill="#f2c41f" /><path d="M52 19l4-2 6 7-2 2z" fill="#1f7b36" />
        </Svg>
      </div>
      <div className="ml-[2px] flex">
        <Task>
          <Svg w={17} h={16} className="mr-[3px]"><path d="M.5 0v2.500h11V0M.5 5.500h11v5H.5zM.5 16v-2.500h11V16M14.500 0v3M14.500 8v8" stroke="#fff" /><path d="M13 4h3v3h-3z" fill="#fff" /></Svg>
        </Task>
        <Task>
          <Svg w={24} h={22}>
            <defs>
              <linearGradient id="cpA" x1="0" y1="0" x2="0" y2="1"><stop offset="0" stopColor="#1fb0f0" /><stop offset=".5" stopColor="#35b36b" /><stop offset="1" stopColor="#f5d624" /></linearGradient>
              <linearGradient id="cpB" x1="0" y1="0" x2="0" y2="1"><stop offset="0" stopColor="#b45af0" /><stop offset=".55" stopColor="#f25590" /><stop offset="1" stopColor="#fa9b4b" /></linearGradient>
            </defs>
            <path d="M7 1h10c-3 1-3 5-4 9-1 3-2 5-4 5H3c-3 0-3-3-2-7C2 4 3 1 7 1z" fill="url(#cpA)" />
            <path d="M13 0h2c2 0 3 2 4 6h-4c-2 0-3 1-3 3 0-4-1-7 1-9z" fill="#1d49c8" />
            <path d="M16 22H9c2-2 3-6 4-10s2-6 5-6h3c3 0 4 4 3 8-2 5-4 8-8 8z" fill="url(#cpB)" />
          </Svg>
        </Task>
        <Task open>
          <Svg w={22} h={20}>
            <path d="M0 1h8l2 2h11v16H0z" fill="#e0a21b" /><path d="M0 4h22v15H0z" fill="#fbd35c" />
            <path d="M4 11h14v8h-3v-4H7v4H4z" fill="#3b8fdb" />
          </Svg>
        </Task>
        <Task>
          <Svg w={23} h={24}>
            <path d="M6.500 5V1.500h10V5" stroke="#35b6ea" strokeWidth="2" />
            <path d="M0 5h23v15c0 2-1 3-3 3H3c-2 0-3-1-3-3z" fill="#fff" />
            <path d="M7 9.500h4v4H7z" fill="#e8502b" /><path d="M12 9.500h4v4h-4z" fill="#7fba00" />
            <path d="M7 14.500h4v4H7z" fill="#2a9fe8" /><path d="M12 14.500h4v4h-4z" fill="#fcb813" />
          </Svg>
        </Task>
        <Task>
          <Svg w={24} h={22}>
            <path d="M0 7l12-7 12 7v15H0z" fill="#0c59a4" /><path d="M2 7h20l-10 8z" fill="#f3f3f3" />
            <path d="M0 7l12 7.500V22H0z" fill="#1b9ce4" /><path d="M24 7v15H0l12-7.500z" fill="#35c1f1" /><path d="M0 22V7l24 15z" fill="#1f9fe8" />
          </Svg>
        </Task>
        <Task>
          <Svg w={24} h={24}>
            <rect width="24" height="24" rx="2" fill="#f37623" />
            <path d="M5.500 7.500c0-3 4-3 5-.5h3c1-2.500 5-2.500 5 .5 0 2-2 3-2 4.500s2 2.500 2 4.500c0 3-4 3-5 .5h-3c-1 2.500-5 2.500-5-.5 0-2 2-3 2-4.500s-2-2.500-2-4.500z" stroke="#fff" strokeWidth="3" />
            <path d="M8 12h8" stroke="#fff" strokeWidth="2.500" />
          </Svg>
        </Task>
        <Task active><ExcelLogo s={22} /></Task>
        <Task>
          <Svg w={24} h={24}>
            {["#f33", "#f0a020", "#f0e030", "#30c840", "#20b8e0", "#3060f0", "#a040f0", "#f040c0"].map((c, i) => (
              <path key={c} d="M12 12c-4-3-5-8 0-11 5 0 7 4 7 6-3-2-6 0-7 5z" fill={c} transform={`rotate(${i * 45 + 100} 12 12)`} />
            ))}
            <circle cx="12" cy="12" r="4" fill="#fff" />
          </Svg>
        </Task>
        <Task open>
          <Chrome>
            <circle cx="19" cy="19" r="7" fill="#2d2926" />
            <path d="M14 15l4-1 5 3-2 3-4-1z" fill="#b49a80" /><circle cx="20" cy="23" r="2" fill="#d7b795" />
          </Chrome>
        </Task>
        <Task open>
          <Chrome>
            <circle cx="19" cy="19" r="8" fill="#0b98a6" />
            <text x="16" y="22.500" fontSize="9" fontWeight="600" fill="#fff">K</text>
          </Chrome>
        </Task>
      </div>
      <Slot className="ml-[135px] w-[50px]">
        <Svg w={24} h={16}>
          <path d="M1 1h20v14H3c-1.500 0-2-1-2-2zM21 4h2v9c0 1.500-1 2-2 2M4 4.500h14M12.500 7.500H18M12.500 10H18M12.500 12.500H18" stroke="#fff" strokeWidth="1.300" />
          <path d="M4.500 7.500h5v4h-5z" stroke="#fff" strokeWidth="1.400" />
        </Svg>
      </Slot>
      <Slot className="w-[22px]"><Svg w={12} h={8}><path d="M.7 7L6 1.500 11.300 7" stroke="#fff" strokeWidth="1.200" /></Svg></Slot>
      <Slot className="w-[27px]">
        <Svg w={16} h={16}><circle cx="8" cy="8" r="8" fill="#f7cf1d" /><path d="M1 12a8 8 0 0 0 13 1l-5-2z" fill="#5aa82c" /><path d="M8 4.500v7M4.500 8h7" stroke="#228b3a" strokeWidth="2.500" /></Svg>
      </Slot>
      <Slot className="w-[22px]">
        <Svg w={12} h={16}><path d="M2 2c2-2 5-2 7 0M2 14c2 2 5 2 7 0M.5 4.500h7v7h-7zM8 7l3-1.500v5L8 9" stroke="#fff" /></Svg>
      </Slot>
      <Slot className="w-[23px]">
        <Svg w={15} h={9}><path d="M.5.500h12v8H.5zM14.500 3v3" stroke="#fff" /><path d="M2 2.500h5v4H2z" fill="#fff" /></Svg>
      </Slot>
      <Slot className="w-[24px]">
        <Svg w={17} h={16}>
          <path d="M15 7A7 7 0 1 0 8 15M1 5.500h14M1 10.500h8M8 1c-4 4-4 10 0 14M8 1c2 2 3 4 3 6" stroke="#fff" />
          <circle cx="13" cy="12" r="3" stroke="#fff" /><path d="M11 14l4-4" stroke="#fff" />
        </Svg>
      </Slot>
      <Slot className="w-[26px]">
        <Svg w={17} h={14}><path d="M.5 5h3l4-4v12l-4-4h-3zM9.500 5c1 1 1 3 0 4M11.500 3c2.500 2 2.500 6 0 8" stroke="#fff" /><path d="M13.500 1c3.500 3 3.500 9 0 12" stroke="#8a93a5" /></Svg>
      </Slot>
      <Slot className="w-[34px] text-[12px] tracking-[-0.5px]">ENG</Slot>
      <div className="flex w-[60px] flex-col items-center justify-center whitespace-nowrap text-[12px] leading-[18px] tracking-[-0.4px]">
        <span>01:43</span><span>02-01-2025</span>
      </div>
      <Slot className="ml-[18px] w-[36px]">
        <Svg w={17} h={16}><path d="M.5.5h15v12H12M.5.5v12H6v3l3-3h1" stroke="#fff" /><path d="M14 8c-1 3-1 4 2 5-3 3-7 1-6-2 1-2 2-3 4-3z" fill="#fff" /></Svg>
      </Slot>
      <div className="w-[5px] border-l border-[#77809a]" />
    </div>
  );
}

/* ---------- calculator form ---------- */

function Key({ w = "w-[56px]", focus, thin, children }: { w?: string; focus?: boolean; thin?: boolean; children: React.ReactNode }) {
  return (
    <div className={"flex h-[40px] shrink-0 " + w + (focus ? " border border-black" : "")}>
      <div className="flex flex-1 border border-b-[#696969] border-l-white border-r-[#696969] border-t-white">
        <div className={"flex flex-1 border border-b-[#a0a0a0] border-l-[#e3e3e3] border-r-[#a0a0a0] border-t-[#e3e3e3] " + (focus ? "p-px" : "")}>
          <div
            className={
              "flex flex-1 items-center justify-center pt-[2px] text-black font-['DejaVu_Sans_Condensed','DejaVu_Sans',sans-serif] text-[16px] leading-none " +
              (thin ? "font-normal" : "pr-[2px] font-bold") +
              (focus ? " border border-dotted border-black" : "")
            }
          >
            {children}
          </div>
        </div>
      </div>
    </div>
  );
}

function Calculator() {
  return (
    <div className="absolute left-[529px] top-[98px] flex h-[530px] w-[308px] flex-col border border-[#5c5c5c] shadow-[0_6px_22px_rgba(0,0,0,0.5)]">
      <div className="flex h-[25px] shrink-0 items-center justify-between bg-white pb-px pl-[3px] pr-[10px] text-[12px] tracking-[-0.2px] text-black">
        Calculator
        <Svg w={10} h={10}><path d="M0 0l10 10M10 0l-10 10" stroke="#000" strokeWidth="1.100" /></Svg>
      </div>
      <div className="flex flex-1 flex-col border border-black bg-[#f0f0f0] pl-[8px] pt-[24px]">
        <div className="flex h-[73px] w-[288px] border border-b-white border-l-[#a0a0a0] border-r-white border-t-[#a0a0a0]">
          <div className="flex-1 border border-b-[#e3e3e3] border-l-[#696969] border-r-[#e3e3e3] border-t-[#696969] bg-white" />
        </div>
        <div className="flex h-[71px] w-[288px] border-x border-b border-b-white border-l-[#a0a0a0] border-r-white">
          <div className="flex-1 border-x border-b border-b-[#e3e3e3] border-l-[#696969] border-r-[#e3e3e3] bg-white pr-[4px] pt-[6px] text-right font-['DejaVu_Sans_Condensed','DejaVu_Sans',sans-serif] text-[36px] leading-[38px] tracking-[-1.500px] text-black">24</div>
        </div>
        <div className="mt-[16px] flex flex-col gap-[24px] pl-[8px]">
          <div className="flex gap-[8px]">
            <Key w="w-[96px]">Clear</Key>
            <Key w="w-[104px]">Back</Key>
            <Key thin><span className="pr-[2px] text-[13px]">/</span></Key>
          </div>
          {[["7", "8", "9", "*"], ["4", "5", "6", "-"], ["1", "2", "3", "+"]].map((row) => (
            <div key={row[0]} className="flex">
              <Key>{row[0]}</Key>
              <div className="w-[16px]" />
              <Key>{row[1]}</Key>
              <div className="w-[24px]" />
              <Key>{row[2]}</Key>
              <div className="w-[16px]" />
              <Key thin={row[3] !== "*"}>{row[3]}</Key>
            </div>
          ))}
          <div className="flex">
            <Key w="w-[120px]">0</Key>
            <div className="w-[32px]" />
            <Key>.</Key>
            <div className="w-[16px]" />
            <Key thin focus>=</Key>
          </div>
        </div>
      </div>
    </div>
  );
}

export default function App() {
  return (
    <div className="relative flex h-[768px] w-[1366px] flex-col overflow-hidden bg-white font-['Open_Sans','Noto_Sans',sans-serif]">
      <TitleBar />
      <Tabs />
      <Ribbon />
      <FormulaBar />
      <Sheet />
      <SheetTabs />
      <StatusBar />
      <Taskbar />
      <Calculator />
    </div>
  );
}
